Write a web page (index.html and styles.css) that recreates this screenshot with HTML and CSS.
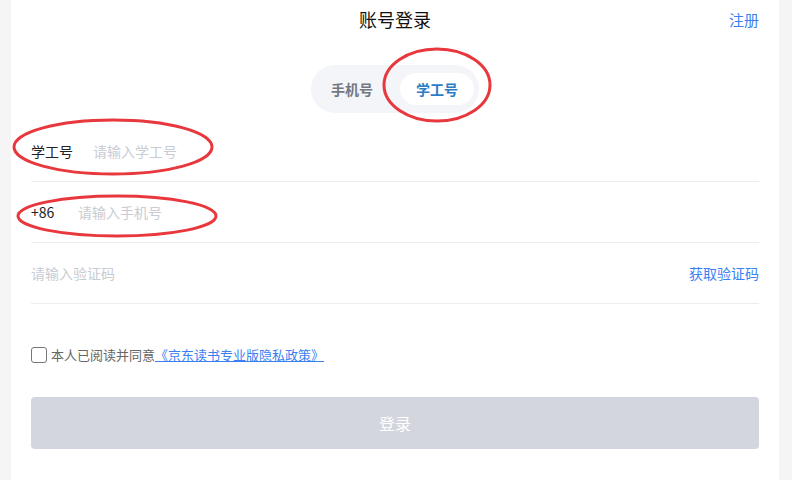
FILE: index.html
```html
<!DOCTYPE html>
<html lang="zh-CN">
<head>
  <meta charset="UTF-8" />
  <meta name="viewport" content="width=device-width, initial-scale=1.0"/>
  <title>账号登录</title>
  <link rel="stylesheet" href="styles.css">
</head>
<body>
  <div class="panel">
    <div class="header">
      <span></span>
      <h2>账号登录</h2>
      <a class="register" href="#">注册</a>
    </div>

    <div class="tabs-wrap">
      <div class="tabs">
        <span class="tab first">手机号</span>
        <span class="tab active">学工号</span>
      </div>
    </div>

    <div class="row">
      <span class="label">学工号</span>
      <input type="text" placeholder="请输入学工号">
    </div>
    <div class="row">
      <span class="label short">+86</span>
      <input type="text" placeholder="请输入手机号">
    </div>
    <div class="row">
      <input type="text" placeholder="请输入验证码">
      <a class="code" href="#">获取验证码</a>
    </div>

    <label class="agree">
      <span class="box"></span>
      本人已阅读并同意<a href="#">《京东读书专业版隐私政策》</a>
    </label>

    <button class="submit">登录</button>
  </div>

  <svg class="marks" width="792" height="480" viewBox="0 0 792 480">
    <ellipse cx="437" cy="85" rx="53" ry="36" />
    <ellipse cx="113" cy="147" rx="99" ry="27" />
    <ellipse cx="117" cy="216" rx="99" ry="20" />
  </svg>
</body>
</html>
```

FILE: styles.css
```css
body {
  margin: 0;
  height: 480px;
  overflow: hidden;
  background-color: #f5f5f5;
  font-family: "Noto Sans CJK SC", "Noto Sans", sans-serif;
}

.panel {
  margin-left: 11px;
  width: 728px;
  height: 480px;
  padding: 0 20px;
  background-color: white;
}

.header {
  display: grid;
  grid-template-columns: 1fr auto 1fr;
  align-items: center;
  height: 38px;
}

h2 {
  margin: 0;
  font-size: 18px;
  font-weight: normal;
  color: #111;
}

.register {
  justify-self: end;
  font-size: 15px;
  color: #3b7ff2;
  text-decoration: none;
}

.tabs-wrap {
  display: flex;
  justify-content: center;
  margin-top: 27px;
  margin-bottom: 8px;
}

.tabs {
  display: flex;
  background-color: #f4f5f9;
  border-radius: 24px;
  padding: 8px 5px 8px 4px;
}

.tab {
  height: 32px;
  line-height: 32px;
  padding: 0 16px;
  border-radius: 16px;
  font-size: 14px;
  font-weight: bold;
  color: #737780;
}

.tab.first {
  padding-right: 27px;
}

.tab.active {
  background-color: white;
  color: #2c7dc3;
}

.row {
  display: flex;
  align-items: center;
  height: 60px;
  border-bottom: 1px solid #ebedf2;
}

.label {
  width: 62px;
  font-size: 14px;
  color: #222;
}

.label.short {
  width: 47px;
}

.row input {
  flex: 1;
  border: none;
  outline: none;
  padding: 0;
  font-family: inherit;
  font-size: 14px;
  color: #222;
}

.row input::placeholder {
  color: #c9ccd3;
}

.code {
  font-size: 14px;
  color: #3b7ff2;
  text-decoration: none;
}

.agree {
  display: flex;
  align-items: center;
  margin-top: 41px;
  font-size: 13px;
  color: #666;
}

.box {
  width: 14px;
  height: 14px;
  border: 1.5px solid #777;
  border-radius: 3px;
  margin-right: 4px;
}

.agree a {
  color: #3b7ff2;
}

.submit {
  display: block;
  width: 100%;
  height: 52px;
  margin-top: 33px;
  border: none;
  border-radius: 4px;
  background-color: #d3d6de;
  color: white;
  font-family: inherit;
  font-size: 16px;
  line-height: 1;
}

.marks {
  position: absolute;
  top: 0;
  left: 0;
  pointer-events: none;
}

.marks ellipse {
  fill: none;
  stroke: #e8383d;
  stroke-width: 3;
}
```
